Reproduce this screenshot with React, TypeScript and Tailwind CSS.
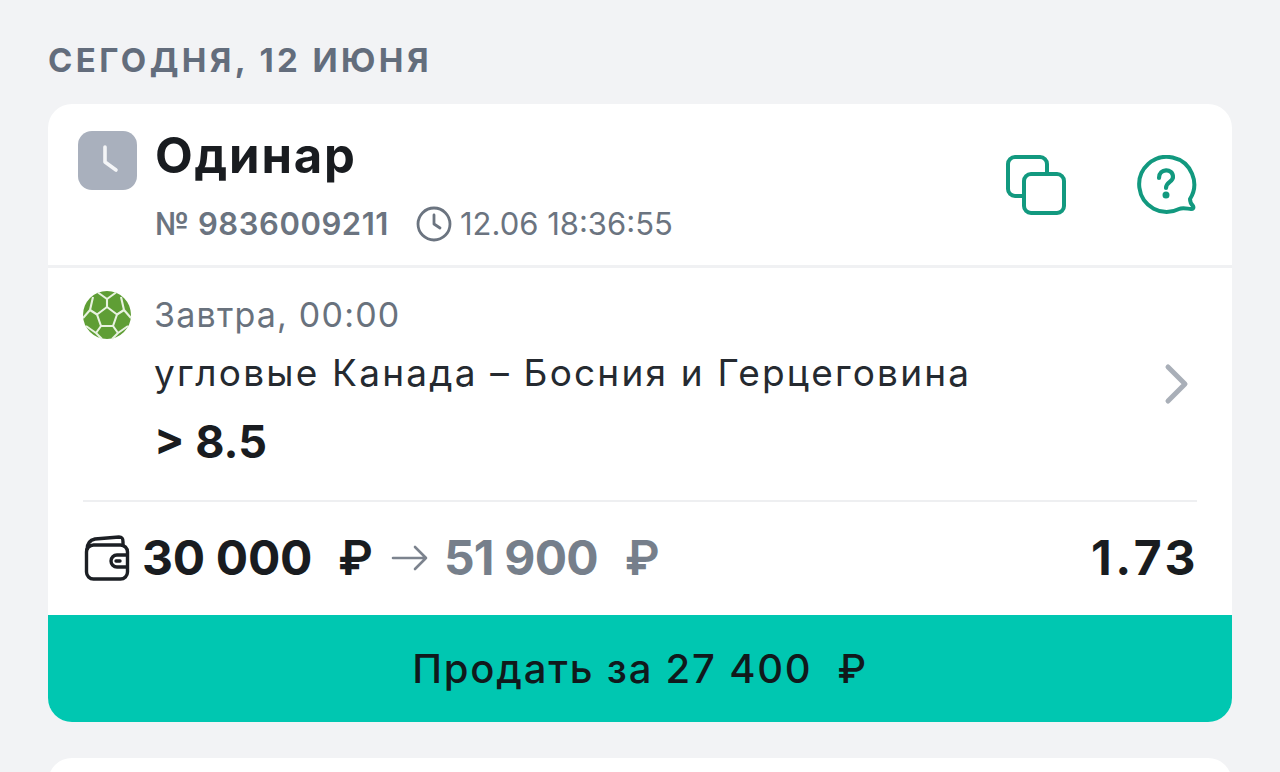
import React from "react";

const font = { fontFamily: "Inter, 'Noto Sans', sans-serif" };

function Ball() {
  return (
    <svg width="50" height="50" viewBox="1 1 50 50" className="shrink-0">
      <circle cx="25" cy="25" r="24" fill="#5f9e35" />
      <g stroke="#e8f2e0" strokeWidth="2.1" fill="none" strokeLinejoin="round">
        <path d="M25 17 L35 24.5 L31 36 L19 36 L15 24.5 Z" />
        <path d="M25 17 L25 9 M35 24.5 L42 20 M31 36 L36 43 M19 36 L14 43 M15 24.5 L8 20" />
        <path d="M25 9 L16 2.5 M25 9 L34 2.5 M42 20 L39 7 M42 20 L49 28 M36 43 L46 36 M36 43 L30 49 M14 43 L20 49 M14 43 L4 36 M8 20 L1 28 M8 20 L11 7" />
      </g>
    </svg>
  );
}

function Wallet() {
  return (
    <svg width="46" height="46" viewBox="0 0 46 46" fill="none" stroke="#1c1f24" strokeWidth="3.4" strokeLinejoin="round" className="shrink-0">
      <path d="M3 15 C3 8 6 5 11 4 L35 2 C38 2 39 3 39 7 V10" />
      <rect x="2.5" y="10" width="41" height="34" rx="7" />
      <path d="M43.5 20 H33 a6 6 0 0 0 0 12 H43.5" />
      <path d="M32 26 H36" strokeLinecap="round" />
    </svg>
  );
}

export default function App() {
  return (
    <div style={font} className="h-[772px] overflow-hidden bg-[#f2f3f5] px-12 pt-[40px]">
      <h2 className="h-[40px] text-[33px] leading-[40px] font-bold tracking-[3.4px] text-[#636d7c]">
        СЕГОДНЯ, 12 ИЮНЯ
      </h2>
      <div className="mt-[24px] overflow-hidden rounded-[24px] bg-white">
        <div className="flex h-[164px] border-b-[3px] border-[#f0f1f3] pl-[30px] pr-[35px] pt-[27px]">
          <div className="h-[59px] w-[59px] shrink-0 rounded-[14px] bg-[#a9b0bd]">
            <svg width="59" height="59" viewBox="0 0 59 59" fill="none" stroke="#f4f5f7" strokeWidth="3.6" strokeLinecap="round" strokeLinejoin="round">
              <path d="M27 16 V31 L38 39" />
            </svg>
          </div>
          <div className="ml-[18px] flex-1">
            <div className="text-[49px] leading-[50px] font-bold tracking-[1.8px] text-[#191c20]">Одинар</div>
            <div className="mt-[23px] flex items-center text-[31px] leading-[40px] text-[#6b7480]">
              <span className="font-semibold tracking-[0.55px]">№ 9836009211</span>
              <svg width="36" height="36" viewBox="0 0 36 36" fill="none" stroke="#6b7480" strokeWidth="2.8" strokeLinecap="round" strokeLinejoin="round" className="ml-[27px]">
                <circle cx="18" cy="18" r="16" />
                <path d="M18 9 V18 L24 22" />
              </svg>
              <span className="ml-[8px] tracking-[0px]">12.06 18:36:55</span>
            </div>
          </div>
          <div className="flex gap-[71px] pt-[24px]">
            <svg width="60" height="60" viewBox="0 0 60 60" fill="none" stroke="#12997f" strokeWidth="4">
              <path d="M18 41 H9 a7 7 0 0 1 -7 -7 V9 a7 7 0 0 1 7 -7 H34 a7 7 0 0 1 7 7 V19" />
              <rect x="18" y="19" width="40" height="39" rx="7" />
            </svg>
            <svg width="60" height="60" viewBox="0 0 60 60" fill="none" stroke="#12997f" strokeWidth="4" strokeLinecap="round" strokeLinejoin="round">
              <path d="M42 54 A27.5 27.5 0 1 1 53 44 C53 47 54 49 56 51 C57 53 56 54 54 54 C51 54 46 52 42 54 Z" />
              <path d="M22 23 C22 13 36 13 36 22 C36 27 29 27 29 33" strokeWidth="4.2" />
              <circle cx="29" cy="40" r="1.5" fill="#12997f" />
            </svg>
          </div>
        </div>
        <div className="h-[234px] px-[35px] pt-[23px]">
          <div className="flex items-center gap-[21px]">
            <Ball />
            <span className="pb-[2px] text-[34px] leading-[46px] tracking-[1.2px] text-[#69727d]">Завтра, 00:00</span>
          </div>
          <div className="flex items-start justify-between pl-[71px]">
            <div>
              <div className="mt-[8px] text-[37px] leading-[48px] tracking-[2.2px] text-[#252a30]">
                угловые Канада – Босния и Герцеговина
              </div>
              <div className="mt-[18px] text-[45px] leading-[54px] font-bold text-[#191c20]">&gt; 8.5</div>
            </div>
            <svg width="28" height="44" viewBox="0 0 28 44" fill="none" stroke="#a9afb8" strokeWidth="5" strokeLinecap="round" strokeLinejoin="round" className="mr-[6px] mt-[21px]">
              <path d="M5 5 L22 22 L5 39" />
            </svg>
          </div>
          <div className="mt-[31px] h-[2px] bg-[#eeeff1]" />
        </div>
        <div className="flex h-[113px] items-center justify-between pl-[36px] pr-[33px] pb-[2px]">
          <div className="flex items-center">
            <Wallet />
            <span className="ml-[12px] text-[48px] leading-[56px] font-bold tracking-[-0.3px] text-[#191c20]">30 000</span>
            <span className="ml-[26px] text-[48px] leading-[56px] font-semibold text-[#191c20]">₽</span>
            <svg width="38" height="28" viewBox="0 0 38 28" fill="none" stroke="#7c838e" strokeWidth="2.6" strokeLinecap="round" strokeLinejoin="round" className="ml-[18px]">
              <path d="M2 14 H35 M24 3 L35 14 L24 25" />
            </svg>
            <span className="ml-[15px] text-[48px] leading-[56px] font-bold tracking-[-0.8px] text-[#767f8b]">51 900</span>
            <span className="ml-[27px] text-[48px] leading-[56px] font-semibold text-[#767f8b]">₽</span>
          </div>
          <span className="text-[48px] leading-[56px] font-bold tracking-[3.6px] text-[#191c20]">1.73</span>
        </div>
        <div className="flex h-[107px] items-center justify-center bg-[#00c7b1] text-[40px] font-medium tracking-[1.8px] text-[#10191c]">
          Продать за 27 400&nbsp;&nbsp;₽
        </div>
      </div>
      <div className="mt-9 h-[60px] rounded-t-[24px] bg-white" />
    </div>
  );
}
